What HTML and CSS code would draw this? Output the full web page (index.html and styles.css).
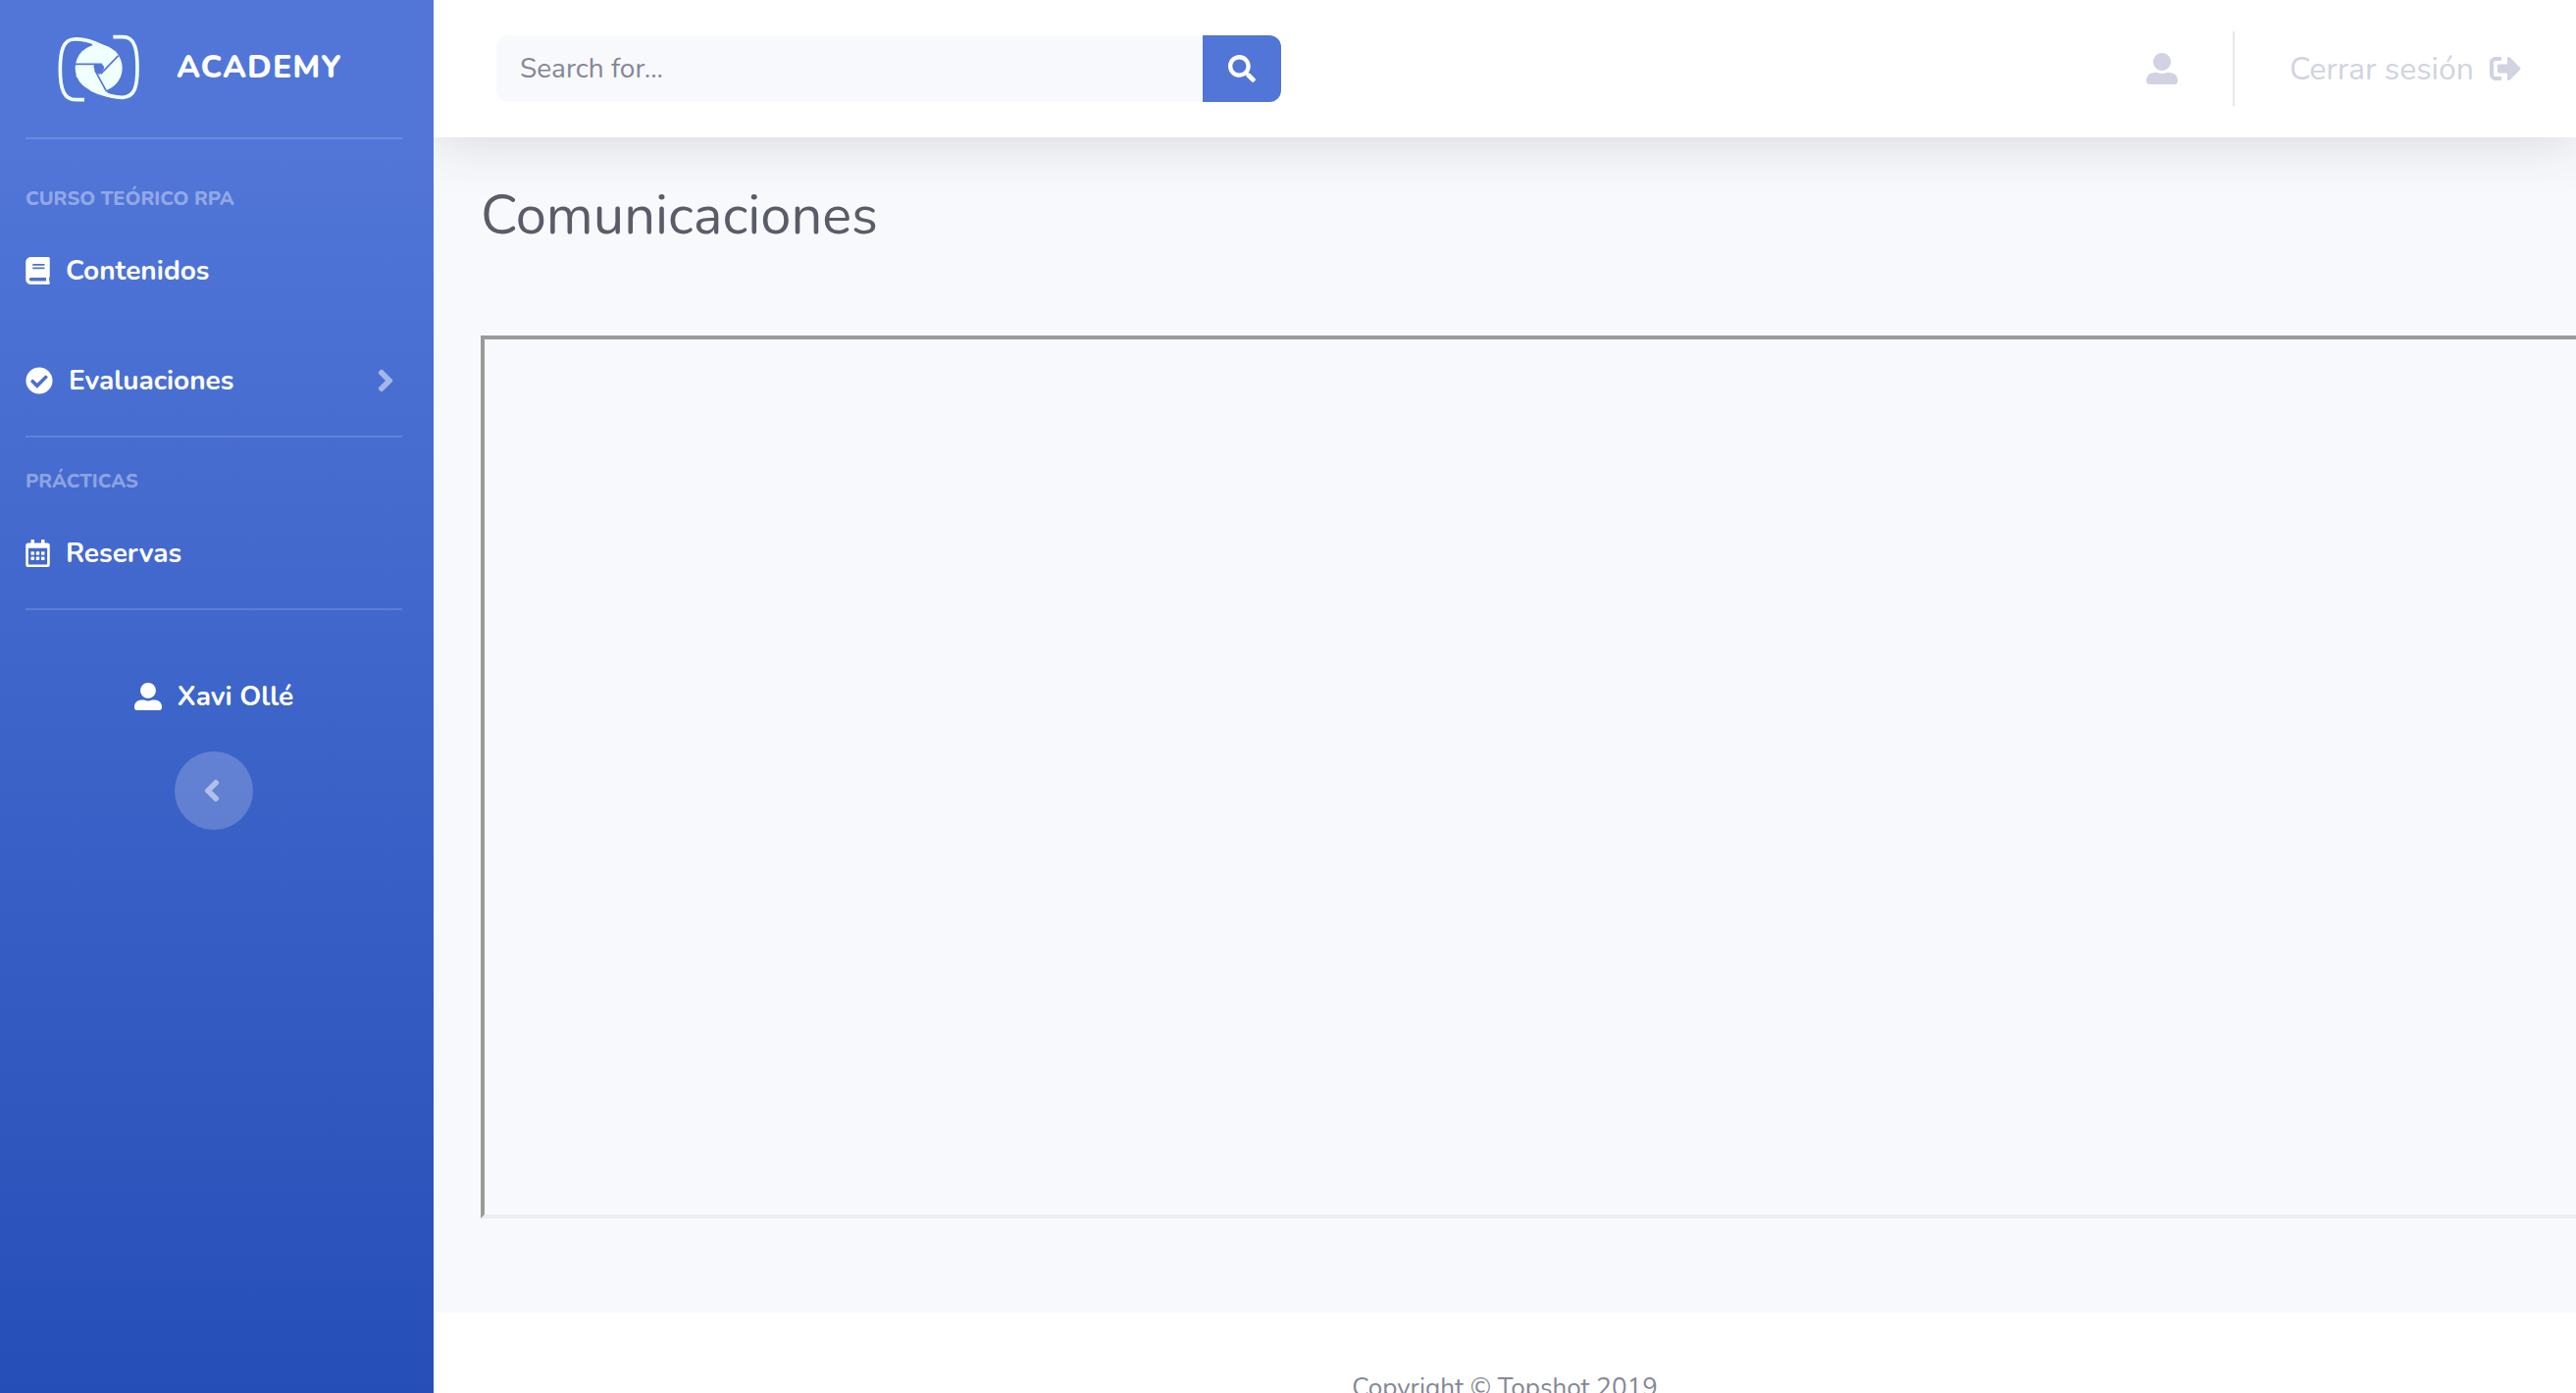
FILE: index.html
```html
<!DOCTYPE html>
<html lang="es">
<head>
<meta charset="utf-8">
<meta name="viewport" content="width=device-width, initial-scale=1">
<title>Academy</title>
<link rel="stylesheet" href="styles.css">
</head>
<body>
<div class="page">
  <nav class="sidebar">
    <a class="brand" href="#">
      <svg class="brand-logo" viewBox="0 0 300 255" aria-hidden="true">
        <g fill="none" stroke="#f0ffff" stroke-width="11">
          <path d="M108 227H82C46 227 34 195 34 135C34 75 44 44 76 42C112 40 170 58 206 94"/>
          <path d="M196 35H226C262 35 270 72 270 130C270 188 262 218 226 220C186 221 118 196 86 150"/>
        </g>
        <path fill="#f0ffff" d="M130 50Q180 62 212 94L150 130ZM90 165Q120 208 180 219L170 150Z"/>
        <circle cx="152" cy="130" r="72" fill="#f0ffff"/>
        <g class="shutter" fill="none" stroke-width="5">
          <path d="M78 118H162M212 92L158 148M176 202L140 136"/>
          <path stroke="none" d="M138 118H158Q169 120 168 132Q156 150 153 150L145 144Q134 132 138 118Z"/>
        </g>
      </svg>
      <span class="brand-name">ACADEMY</span>
    </a>
    <hr class="divider">
    <h2 class="nav-heading">CURSO TEÓRICO RPA</h2>
    <a class="nav-link" href="#">
      <svg class="icon-book" viewBox="0 0 448 512" aria-hidden="true"><path d="M448 360V24c0-13.3-10.7-24-24-24H96C43 0 0 43 0 96v320c0 53 43 96 96 96h328c13.3 0 24-10.7 24-24v-16c0-7.5-3.5-14.3-8.9-18.7-4.2-15.4-4.2-59.3 0-74.7 5.4-4.3 8.9-11.1 8.9-18.6zM128 134c0-3.3 2.7-6 6-6h212c3.3 0 6 2.7 6 6v20c0 3.3-2.7 6-6 6H134c-3.3 0-6-2.7-6-6v-20zm0 64c0-3.3 2.7-6 6-6h212c3.3 0 6 2.7 6 6v20c0 3.3-2.7 6-6 6H134c-3.3 0-6-2.7-6-6v-20zm253.400 250H96c-17.700 0-32-14.300-32-32 0-17.600 14.400-32 32-32h285.400c-1.900 17.100-1.900 46.900 0 64z"/></svg>
      <span>Contenidos</span>
    </a>
    <a class="nav-link" href="#">
      <svg class="icon" viewBox="0 0 512 512" aria-hidden="true"><path d="M504 256c0 136.967-111.033 248-248 248S8 392.967 8 256 119.033 8 256 8s248 111.033 248 248zM227.314 387.314l184-184c6.248-6.248 6.248-16.379 0-22.627l-22.627-22.627c-6.248-6.249-16.379-6.249-22.628 0L216 308.118l-70.059-70.059c-6.248-6.248-16.379-6.248-22.628 0l-22.627 22.627c-6.248 6.248-6.248 16.379 0 22.627l104 104c6.249 6.249 16.379 6.249 22.628.001z"/></svg>
      <span>Evaluaciones</span>
      <svg class="icon-angle" viewBox="0 0 256 512" aria-hidden="true"><path d="M224.300 273l-136 136c-9.400 9.400-24.600 9.400-33.900 0l-22.600-22.600c-9.400-9.400-9.400-24.600 0-33.900l96.400-96.400-96.400-96.400c-9.400-9.400-9.400-24.600 0-33.900L54.300 103c9.400-9.400 24.600-9.400 33.900 0l136 136c9.500 9.400 9.500 24.600.1 34z"/></svg>
    </a>
    <hr class="divider">
    <h2 class="nav-heading nav-heading-tight">PRÁCTICAS</h2>
    <a class="nav-link" href="#">
      <svg class="icon-book" viewBox="0 0 448 512" aria-hidden="true"><path fill-rule="evenodd" d="M48 64H96V12Q96 0 108 0H148Q160 0 160 12V64H288V12Q288 0 300 0H340Q352 0 352 12V64H400Q448 64 448 112V464Q448 512 400 512H48Q0 512 0 464V112Q0 64 48 64ZM48 160V458Q48 464 54 464H394Q400 464 400 458V160ZM108 224H148Q160 224 160 236V276Q160 288 148 288H108Q96 288 96 276V236Q96 224 108 224ZM204 224H244Q256 224 256 236V276Q256 288 244 288H204Q192 288 192 276V236Q192 224 204 224ZM300 224H340Q352 224 352 236V276Q352 288 340 288H300Q288 288 288 276V236Q288 224 300 224ZM108 320H148Q160 320 160 332V372Q160 384 148 384H108Q96 384 96 372V332Q96 320 108 320ZM204 320H244Q256 320 256 332V372Q256 384 244 384H204Q192 384 192 372V332Q192 320 204 320ZM300 320H340Q352 320 352 332V372Q352 384 340 384H300Q288 384 288 372V332Q288 320 300 320Z"/></svg>
      <span>Reservas</span>
    </a>
    <hr class="divider">
    <a class="nav-link nav-user" href="#">
      <svg class="icon" viewBox="0 0 512 512" aria-hidden="true"><path d="M256 288c79.500 0 144-64.500 144-144S335.500 0 256 0 112 64.500 112 144s64.500 144 144 144zm128 32h-55.100c-22.200 10.200-46.900 16-72.900 16s-50.600-5.800-72.900-16H128C57.300 320 0 377.300 0 448v16c0 26.500 21.500 48 48 48h416c26.500 0 48-21.500 48-48v-16c0-70.700-57.300-128-128-128z"/></svg>
      <span>Xavi Ollé</span>
    </a>
    <button class="toggle" type="button" aria-label="Contraer menú">
      <svg class="icon-angle-left" viewBox="0 0 256 512" aria-hidden="true"><path d="M31.700 239l136-136c9.400-9.400 24.600-9.400 33.900 0l22.600 22.600c9.400 9.400 9.400 24.600 0 33.900L127.900 256l96.400 96.400c9.400 9.400 9.400 24.600 0 33.900L201.700 409c-9.400 9.400-24.600 9.400-33.900 0l-136-136c-9.500-9.400-9.500-24.600-.1-34z"/></svg>
    </button>
  </nav>

  <div class="content">
    <header class="topbar">
      <form class="search">
        <input class="search-input" type="text" placeholder="Search for..." aria-label="Search">
        <button class="search-button" type="button" aria-label="Buscar">
          <svg class="icon" viewBox="0 0 512 512" aria-hidden="true"><path d="M505 442.700L405.300 343c-4.500-4.500-10.600-7-17-7H372c27.600-35.300 44-79.700 44-128C416 93.100 322.900 0 208 0S0 93.100 0 208s93.100 208 208 208c48.300 0 92.700-16.400 128-44v16.300c0 6.400 2.500 12.500 7 17l99.700 99.700c9.400 9.400 24.600 9.400 33.900 0l28.300-28.300c9.400-9.400 9.400-24.600.1-34zM208 336c-70.700 0-128-57.200-128-128 0-70.700 57.200-128 128-128 70.700 0 128 57.200 128 128 0 70.700-57.200 128-128 128z"/></svg>
        </button>
      </form>
      <div class="topbar-links">
        <a class="topbar-link" href="#" aria-label="Perfil">
          <svg class="icon-large" viewBox="0 0 512 512" aria-hidden="true"><path d="M256 288c79.500 0 144-64.500 144-144S335.500 0 256 0 112 64.500 112 144s64.500 144 144 144zm128 32h-55.100c-22.200 10.200-46.900 16-72.900 16s-50.600-5.800-72.900-16H128C57.300 320 0 377.300 0 448v16c0 26.500 21.500 48 48 48h416c26.500 0 48-21.500 48-48v-16c0-70.700-57.300-128-128-128z"/></svg>
        </a>
        <span class="topbar-divider"></span>
        <a class="topbar-link" href="#">
          <span>Cerrar sesión</span>
          <svg class="icon-large" viewBox="0 0 512 512" aria-hidden="true"><path d="M497 273L329 441c-15 15-41 4.500-41-17v-96H152c-13.300 0-24-10.700-24-24v-96c0-13.300 10.700-24 24-24h136V88c0-21.400 25.900-32 41-17l168 168c9.300 9.400 9.300 24.600 0 34zM192 436v-40c0-6.600-5.400-12-12-12H96c-17.700 0-32-14.300-32-32V160c0-17.700 14.300-32 32-32h84c6.600 0 12-5.400 12-12V76c0-6.600-5.400-12-12-12H96c-53 0-96 43-96 96v192c0 53 43 96 96 96h84c6.600 0 12-5.400 12-12z"/></svg>
        </a>
      </div>
    </header>
    <main class="main">
      <h1 class="title">Comunicaciones</h1>
      <div class="frame"></div>
    </main>
    <footer class="footer">Copyright © Topshot 2019</footer>
  </div>
</div>
</body>
</html>
```
FILE: styles.css
```css
* {
  box-sizing: border-box;
}

body {
  margin: 0;
  height: 100vh;
  overflow: hidden;
  font-family: Nunito, Lato, sans-serif;
  font-size: 28px;
  color: #858796;
}

a {
  color: inherit;
  text-decoration: none;
}

svg {
  display: block;
  flex: none;
  fill: currentColor;
}

.page {
  display: flex;
  min-height: 100vh;
}

/* Sidebar */

.sidebar {
  flex: none;
  display: flex;
  flex-direction: column;
  width: 442px;
  padding: 0 32px 0 26px;
  color: #fff;
  background: linear-gradient(180deg, #5176d8 10%, #234cb5 100%);
}

.brand {
  display: flex;
  align-items: center;
  gap: 30px;
  height: 140px;
  padding: 0 0 4px 24px;
}

.brand-logo {
  width: 100px;
  height: 85px;
}

.shutter {
  fill: #5176d8;
  stroke: #5176d8;
}

.brand-name {
  font-size: 32px;
  font-weight: 800;
  letter-spacing: 1px;
}

.divider {
  width: 100%;
  height: 2px;
  margin: 0;
  border: 0;
  background: rgba(255, 255, 255, 0.15);
}

.nav-heading {
  margin: 48px 0 4px;
  font-size: 20px;
  line-height: 26px;
  font-weight: 800;
  color: rgba(255, 255, 255, 0.4);
}

.nav-heading-tight {
  margin-top: 32px;
}

.nav-link {
  display: flex;
  align-items: center;
  gap: 16px;
  height: 112px;
  font-size: 28px;
  font-weight: 700;
}

.icon {
  width: 28px;
  height: 28px;
}

.icon-book {
  width: 25px;
  height: 28px;
}

.icon-large {
  width: 32px;
  height: 32px;
}

.icon-angle,
.icon-angle-left {
  width: 18px;
  height: 36px;
}

.icon-angle {
  margin-left: auto;
  margin-right: 8px;
  color: rgba(255, 255, 255, 0.5);
}

.icon-angle-left {
  margin-right: 4px;
}

.nav-user {
  justify-content: center;
  margin-top: 32px;
}

.toggle {
  display: flex;
  align-items: center;
  justify-content: center;
  align-self: center;
  width: 80px;
  height: 80px;
  padding: 0;
  border: 0;
  border-radius: 50%;
  color: rgba(255, 255, 255, 0.5);
  background: rgba(255, 255, 255, 0.2);
}

/* Content */

.content {
  flex: 1;
  min-width: 0;
  overflow: hidden;
  background: #f8f9fd;
}

.topbar {
  display: flex;
  align-items: center;
  justify-content: space-between;
  height: 140px;
  padding: 0 56px 0 64px;
  background: #fff;
  box-shadow: 0 4px 56px rgba(46, 54, 50, 0.17);
}

.search {
  display: flex;
  width: 800px;
  height: 68px;
}

.search-input {
  flex: 1;
  min-width: 0;
  padding: 0 24px;
  border: 0;
  border-radius: 12px 0 0 12px;
  font: inherit;
  color: #6e707e;
  background: #f8f9fd;
}

.search-input::placeholder {
  color: #858796;
  opacity: 1;
}

.search-button {
  display: flex;
  align-items: center;
  justify-content: center;
  width: 80px;
  padding: 0;
  border: 0;
  border-radius: 0 12px 12px 0;
  color: #fff;
  background: #5176d8;
}

.topbar-links {
  display: flex;
  align-items: center;
  gap: 56px;
}

.topbar-link {
  display: flex;
  align-items: center;
  gap: 16px;
  font-size: 32px;
  color: #d1d3e2;
}

.topbar-divider {
  width: 2px;
  height: 76px;
  background: #e3e6f0;
}

.main {
  padding: 46px 48px 96px;
}

.title {
  margin: 0 0 88px;
  font-size: 56px;
  line-height: 68px;
  font-weight: 400;
  color: #5a5c69;
}

.frame {
  width: 120%;
  height: 900px;
  border: 4px solid;
  border-color: #9a9a9a #eee #eee #9a9a9a;
}

.footer {
  padding: 64px 0;
  font-size: 26px;
  line-height: 26px;
  text-align: center;
  background: #fff;
}
```
